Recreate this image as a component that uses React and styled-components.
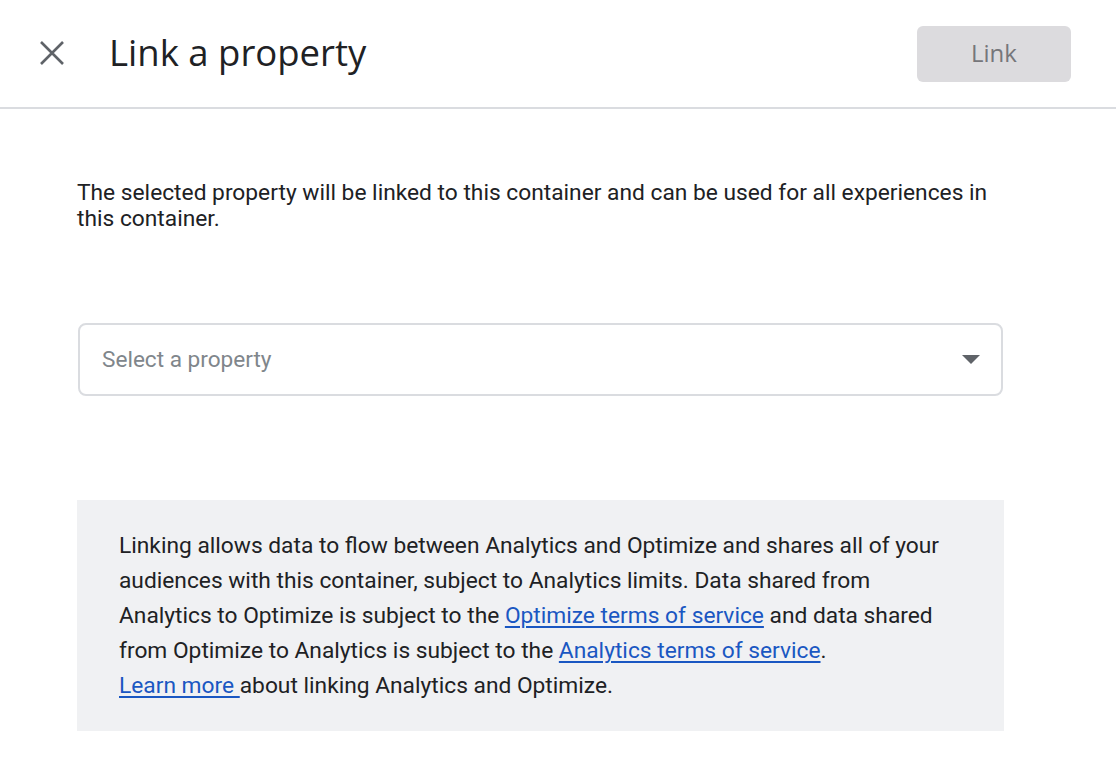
import React from "react";
import styled, { createGlobalStyle } from "styled-components";

const GlobalStyle = createGlobalStyle`
  html, body { margin: 0; padding: 0; background: #ffffff; }
  body { font-family: Roboto, "Liberation Sans", Arial, sans-serif; color: #202124; }
  * { box-sizing: border-box; }
`;

const Page = styled.div`
  width: 1116px;
  min-height: 774px;
  background: #fff;
`;

const Header = styled.header`
  height: 109px;
  display: flex;
  align-items: center;
  padding: 0 45px 0 40px;
  border-bottom: 2px solid #dadce0;
`;

const CloseButton = styled.button`
  width: 24px;
  height: 24px;
  padding: 0;
  border: none;
  background: transparent;
  display: flex;
  align-items: center;
  justify-content: center;
  cursor: pointer;
  margin-top: -2px;
`;

const Title = styled.h1`
  margin: -4px 0 0 45px;
  font-family: "Open Sans", Roboto, sans-serif;
  font-weight: 400;
  font-size: 36.5px;
  color: #202124;
  flex: 1;
`;

const PrimaryButton = styled.button`
  width: 154px;
  height: 56px;
  border: none;
  border-radius: 6px;
  background: #dcdbde;
  color: #76767a;
  font-family: "Open Sans", Roboto, sans-serif;
  font-size: 24px;
  font-weight: 500;
  padding: 0 0 2px;
`;

const Content = styled.main`
  padding: 71px 0 0 77px;
  width: 1004px;
`;

const Description = styled.p`
  margin: 0;
  font-size: 22.75px;
  line-height: 26px;
  color: #202124;
`;

const SelectBox = styled.div`
  margin: 91px 0 0 1px;
  height: 73px;
  width: 925px;
  border: 2px solid #dadce0;
  border-radius: 8px;
  display: flex;
  align-items: center;
  justify-content: space-between;
  padding: 0 20px 0 22px;
`;

const Placeholder = styled.span`
  font-size: 22.6px;
  color: #80868b;
`;

const Caret = styled.span`
  width: 0;
  height: 0;
  border-left: 9px solid transparent;
  border-right: 9px solid transparent;
  border-top: 9px solid #5f6368;
  margin-right: 1px;
`;

const InfoBox = styled.section`
  margin-top: 104px;
  background: #f0f1f3;
  padding: 28px 42px 28px 42px;
  width: 927px;
  font-size: 22.75px;
  line-height: 35px;
  color: #202124;
`;

const Link = styled.a`
  color: #1a57c2;
  text-decoration: underline;
  text-underline-offset: 3px;
`;

function CloseIcon() {
  return (
    <svg width="24" height="24" viewBox="0 0 24 24">
      <path d="M1 1 L23 23 M23 1 L1 23" stroke="#5f6368" strokeWidth="2.6" fill="none" />
    </svg>
  );
}

export default function App() {
  return (
    <Page>
      <GlobalStyle />
      <Header>
        <CloseButton aria-label="Close">
          <CloseIcon />
        </CloseButton>
        <Title>Link a property</Title>
        <PrimaryButton disabled>Link</PrimaryButton>
      </Header>
      <Content>
        <Description>
          The selected property will be linked to this container and can be used for all experiences in
          this container.
        </Description>
        <SelectBox>
          <Placeholder>Select a property</Placeholder>
          <Caret />
        </SelectBox>
        <InfoBox>
          Linking allows data to flow between Analytics and Optimize and shares all of your audiences with
          this container, subject to Analytics limits. Data shared from Analytics to Optimize is subject to
          the <Link href="#">Optimize terms of service</Link> and data shared from Optimize to Analytics is
          subject to the <Link href="#">Analytics terms of service</Link>.
          <br />
          <Link href="#">Learn more </Link>about linking Analytics and Optimize.
        </InfoBox>
      </Content>
    </Page>
  );
}
